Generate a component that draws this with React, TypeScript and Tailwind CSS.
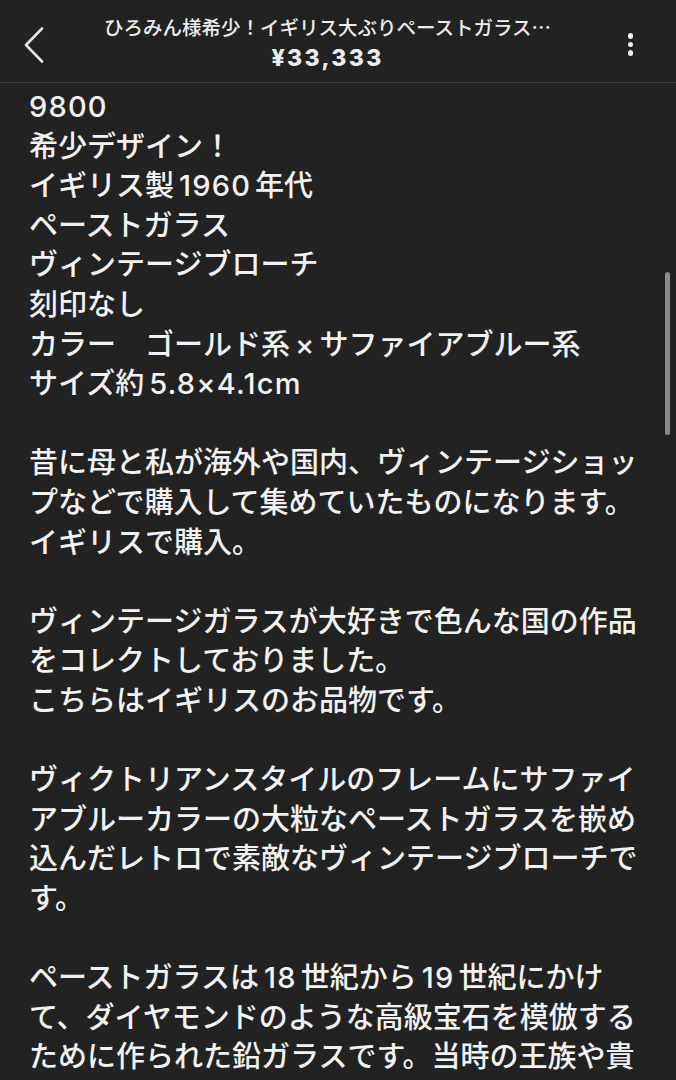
import React from "react";

const lines: string[] = [
  "9800",
  "希少デザイン！",
  "イギリス製1960年代",
  "ペーストガラス",
  "ヴィンテージブローチ",
  "刻印なし",
  "カラー　ゴールド系×サファイアブルー系",
  "サイズ約5.8×4.1cm",
  "",
  "昔に母と私が海外や国内、ヴィンテージショッ",
  "プなどで購入して集めていたものになります。",
  "イギリスで購入。",
  "",
  "ヴィンテージガラスが大好きで色んな国の作品",
  "をコレクトしておりました。",
  "こちらはイギリスのお品物です。",
  "",
  "ヴィクトリアンスタイルのフレームにサファイ",
  "アブルーカラーの大粒なペーストガラスを嵌め",
  "込んだレトロで素敵なヴィンテージブローチで",
  "す。",
  "",
  "ペーストガラスは18世紀から19世紀にかけ",
  "て、ダイヤモンドのような高級宝石を模倣する",
  "ために作られた鉛ガラスです。当時の王族や貴",
];

function Line({ text }: { text: string }) {
  if (!text) return <>{"\u00a0"}</>;
  const parts = text.split(/([0-9A-Za-z.×]+)/).filter((p) => p.length > 0);
  return (
    <>
      {parts.map((p, i) => {
        const latin = /^[0-9A-Za-z.×]+$/.test(p);
        if (!latin) return <span key={i}>{p}</span>;
        const before = i > 0;
        const after = i < parts.length - 1;
        return (
          <span
            key={i}
            className={
              "inline-block tracking-[1.2px] " +
              (before ? "ml-[5px] " : "") +
              (after ? "mr-[4px]" : "")
            }
            style={{ fontFamily: 'Inter, "Noto Sans", sans-serif' }}
          >
            {p}
          </span>
        );
      })}
    </>
  );
}

export default function App() {
  return (
    <div
      className="relative w-[676px] h-[1080px] overflow-hidden bg-[#222222] text-[#f2f2f2]"
      style={{ fontFamily: '"Noto Sans CJK JP", "Noto Sans", sans-serif' }}
    >
      {/* Header */}
      <div className="h-[83px] flex border-b border-[#3a3a3a] bg-[#222222]">
        <div className="w-[70px] pl-[24px] pt-[27px]">
          <svg width="20" height="36" viewBox="0 0 20 36" fill="none">
            <path d="M18 1.5 L2 18 L18 34.5" stroke="#e6e6e6" strokeWidth="2.6" strokeLinecap="round" strokeLinejoin="round" />
          </svg>
        </div>
        <div className="flex-1 flex flex-col items-center pt-[15px]">
          <div className="text-[19.5px] leading-[24px] font-medium text-[#ececec] whitespace-nowrap">
            ひろみん様希少！イギリス大ぶりペーストガラス…
          </div>
          <div
            className="mt-[4px] text-[23px] leading-[30px] font-extrabold tracking-[2.3px] text-[#ececec] whitespace-nowrap"
            style={{ fontFamily: 'Inter, "Noto Sans", sans-serif' }}
          >
            ¥33,333
          </div>
        </div>
        <div className="w-[91px] flex justify-center pt-[33px]">
          <div className="flex flex-col gap-[3px] items-center">
            <div className="w-[5.5px] h-[5.5px] rounded-full bg-[#eeeeee]" />
            <div className="w-[5.5px] h-[5.5px] rounded-full bg-[#eeeeee]" />
            <div className="w-[5.5px] h-[5.5px] rounded-full bg-[#eeeeee]" />
          </div>
        </div>
      </div>

      {/* Body */}
      <div className="pl-[29px] pr-[29px] pt-[2px] font-medium">
        {lines.map((l, i) => (
          <div key={i} className="h-[39.6px] leading-[39.6px] text-[29px] whitespace-nowrap">
            <Line text={l} />
          </div>
        ))}
      </div>

      {/* Scrollbar */}
      <div className="absolute left-[665px] top-[272px] w-[5px] h-[163px] rounded-full bg-[#8a8a8a]" />
    </div>
  );
}
